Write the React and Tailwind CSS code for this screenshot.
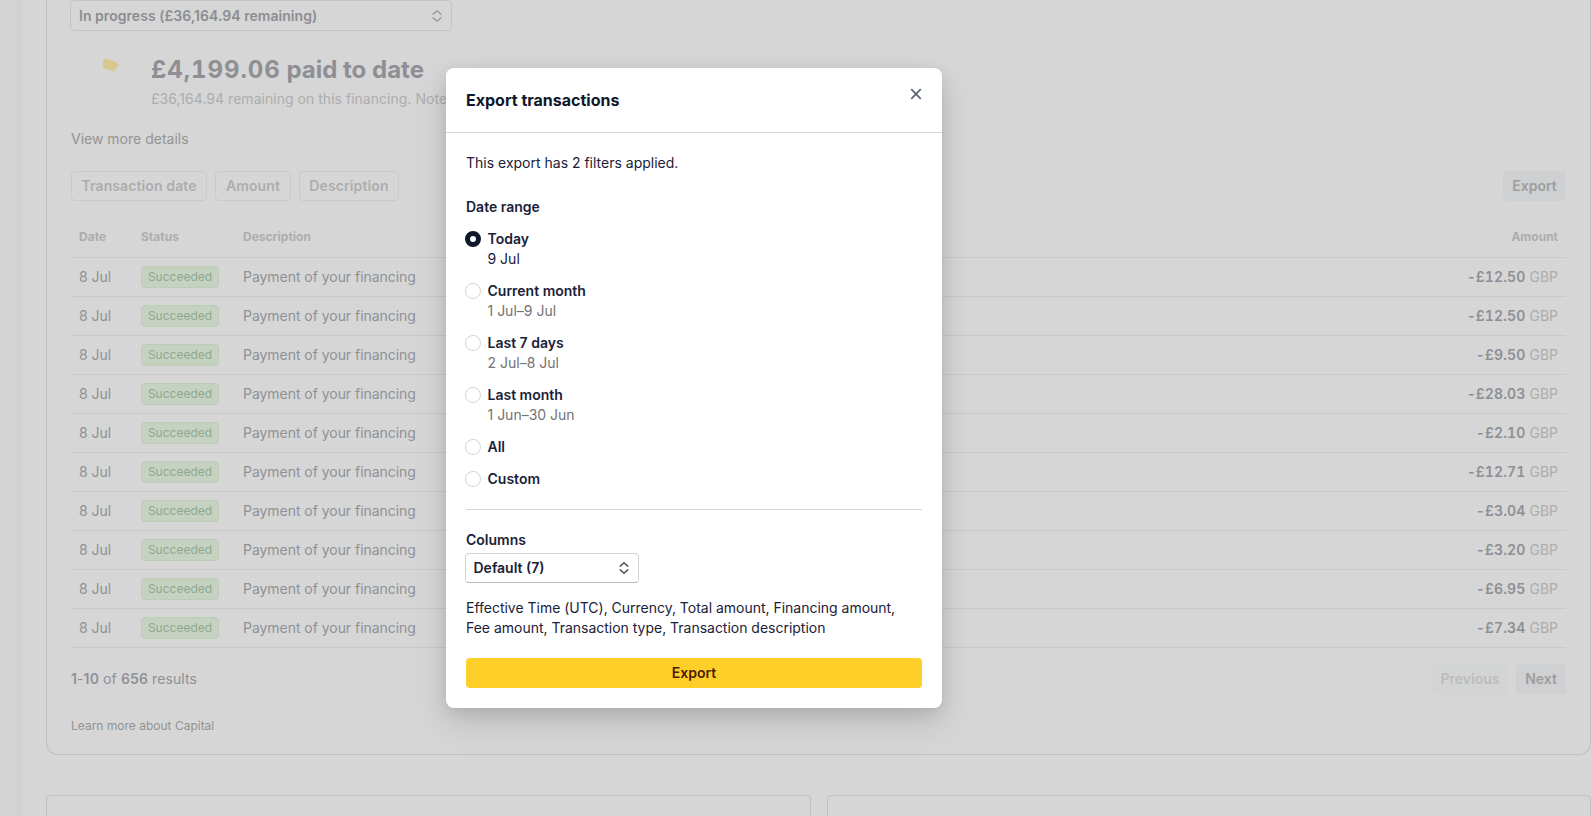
const transactions = [
  "12.50",
  "12.50",
  "9.50",
  "28.03",
  "2.10",
  "12.71",
  "3.04",
  "3.20",
  "6.95",
  "7.34",
];

const ranges = [
  { label: "Today", dates: "9 Jul", checked: true },
  { label: "Current month", dates: "1 Jul–9 Jul" },
  { label: "Last 7 days", dates: "2 Jul–8 Jul" },
  { label: "Last month", dates: "1 Jun–30 Jun" },
  { label: "All" },
  { label: "Custom" },
];

const Chevrons = ({ className }) => (
  <svg
    width="10"
    height="12"
    viewBox="0 0 10 12"
    fill="none"
    stroke="currentColor"
    strokeWidth="1.5"
    strokeLinecap="round"
    strokeLinejoin="round"
    className={className}
  >
    <path d="M1.2 4.1 5 0.8l3.8 3.3" />
    <path d="M1.2 7.9 5 11.2l3.8-3.3" />
  </svg>
);

const CloseIcon = ({ className }) => (
  <svg
    width="12"
    height="12"
    viewBox="0 0 12 12"
    fill="none"
    stroke="currentColor"
    strokeWidth="1.8"
    className={className}
  >
    <path d="m1.2 1.2 9.6 9.6M10.8 1.2l-9.6 9.6" />
  </svg>
);

const FilterButton = ({ children, className }) => (
  <button
    className={`h-[30px] rounded border border-[#cacaca] text-center font-semibold tracking-[0.008em] text-[#adadad] ${className}`}
  >
    {children}
  </button>
);

const TransactionRow = ({ amount }) => (
  <div className="flex h-[39px] items-center border-b border-[#c9c9c9] px-2">
    <div className="w-[62px] text-[#8f9196]">8 Jul</div>
    <div className="w-[102px]">
      <span className="flex h-[22px] w-[78px] items-center justify-center rounded border border-[#bccdb7] bg-[#c5d2c1] text-xs text-[#8fa98e]">
        Succeeded
      </span>
    </div>
    <div className="flex-1 tracking-[-0.003em] text-[#8f9196]">
      Payment of your financing
    </div>
    <div className="text-[#adadad]">
      <span className="font-semibold tabular-nums tracking-[0.01em] text-[#8d8f94]">
        -£{amount}
      </span>{" "}
      GBP
    </div>
  </div>
);

const FinancingCard = () => (
  <div className="h-[755px] w-[1545px] rounded-b-xl border border-t-0 border-[#bfbfbf] px-6">
    <div className="-ml-px flex h-[31px] w-[382px] items-center justify-between rounded border border-[#c4c4c4] pl-2 pr-[9px] font-semibold tracking-[0.003em] text-[#8b8d92]">
      In progress (£36,164.94 remaining)
      <Chevrons className="text-[#9b9b9b]" />
    </div>

    <div className="mt-[22px] flex">
      <svg width="64" height="56" viewBox="0 0 64 56" className="mr-4">
        <path d="M32 6a26 26 0 0 1 16 5.4L42.5 19a16 16 0 0 0-10.5-3.3Z" fill="#d8c88f" />
      </svg>
      <div>
        <h1 className="h-8 pt-px text-2xl font-bold text-[#8d8f94]">
          <span className="tabular-nums tracking-[0.039em]">£4,199.06</span>{" "}
          paid to date
        </h1>
        <p className="mt-1 whitespace-nowrap tracking-[0.002em] text-[#adadad]">
          £36,164.94 remaining on this financing. Note
        </p>
      </div>
    </div>
    <p className="mt-5 text-[#949494]">View more details</p>

    <div className="mt-[22px] flex gap-2">
      <FilterButton className="w-[136px]">Transaction date</FilterButton>
      <FilterButton className="w-[76px]">Amount</FilterButton>
      <FilterButton className="w-[100px]">Description</FilterButton>
      <button className="ml-auto h-[30px] w-[63px] rounded bg-[#cfd0d1] font-semibold text-[#9e9e9e]">
        Export
      </button>
    </div>

    <div className="mt-4">
      <div className="flex h-[41px] items-center border-b border-[#c9c9c9] px-2 text-xs font-bold text-[#adadad]">
        <div className="w-[62px]">Date</div>
        <div className="w-[102px]">Status</div>
        <div className="flex-1">Description</div>
        <div>Amount</div>
      </div>
      {transactions.map((amount, i) => (
        <TransactionRow key={i} amount={amount} />
      ))}
    </div>

    <div className="mt-4 flex items-center gap-2">
      <p className="mr-auto tracking-[0.008em] text-[#8f9196]">
        <span className="font-semibold">1</span>-
        <span className="font-semibold">10</span> of{" "}
        <span className="font-semibold">656</span> results
      </p>
      <button className="h-[30px] w-[76px] rounded bg-[#d3d4d4] font-semibold text-[#bcbcbc]">
        Previous
      </button>
      <button className="h-[30px] w-[50px] rounded bg-[#cfd0d1] font-semibold text-[#9e9e9e]">
        Next
      </button>
    </div>
    <p className="mt-[22px] text-xs leading-5 text-[#939393]">
      Learn more about Capital
    </p>
  </div>
);

const ExportDialog = () => (
  <div className="absolute left-[446px] top-[68px] h-[640px] w-[496px] rounded-lg bg-white text-[#1a2138] shadow-[0_15px_35px_0_rgba(0,0,0,0.12),0_5px_15px_0_rgba(0,0,0,0.1)]">
    <div className="flex h-[65px] items-start justify-between border-b border-[#d6d6d6] px-5">
      <h2 className="mt-5 text-base font-bold text-[#0f172a]">
        Export transactions
      </h2>
      <CloseIcon className="mt-5 text-[#5f6477]" />
    </div>

    <div className="px-5 pt-5">
      <p>This export has 2 filters applied.</p>

      <h3 className="mt-6 font-semibold">Date range</h3>
      <div className="mt-3 flex flex-col gap-3">
        {ranges.map((range) => (
          <label key={range.label} className="-ml-px flex gap-[6.5px]">
            <span
              className={`mt-0.5 size-4 rounded-full ${
                range.checked
                  ? "border-5 border-[#0f172a]"
                  : "border border-[#d5d5d5]"
              }`}
            />
            <span>
              <span className="block font-semibold">{range.label}</span>
              {range.dates && (
                <span
                  className={`block ${range.checked ? "" : "text-[#737373]"}`}
                >
                  {range.dates}
                </span>
              )}
            </span>
          </label>
        ))}
      </div>

      <hr className="mt-5 border-[#d6d6d6]" />

      <h3 className="mt-5 font-semibold">Columns</h3>
      <div className="-ml-px mt-[3px] flex h-[30px] w-[174px] items-center justify-between rounded border border-[#d5d5d5] border-b-[#b8b8b8] pl-[7.5px] pr-[9px] font-semibold">
        Default (7)
        <Chevrons className="text-[#4b5468]" />
      </div>
      <p className="mt-[15px] whitespace-nowrap tracking-[-0.001em]">
        Effective Time (UTC), Currency, Total amount, Financing amount,
        <br />
        Fee amount, Transaction type, Transaction description
      </p>

      <button className="mt-5 h-[30px] w-full rounded bg-[#ffcf29] font-semibold text-[#4a2000]">
        Export
      </button>
    </div>
  </div>
);

export default function App() {
  return (
    <div className="relative flex h-[816px] w-[1592px] overflow-hidden bg-[#d6d6d6] font-['Inter',sans-serif] text-sm">
      <div className="w-[22px] border-r border-[#cfd0d3] bg-gradient-to-r from-[#d5d5d5] to-[#d1d2d4]" />
      <main className="ml-6">
        <FinancingCard />
        <div className="mt-10 flex gap-4">
          <div className="h-10 w-[765px] rounded border border-[#bfbfbf]" />
          <div className="h-10 w-[764px] rounded border border-[#bfbfbf]" />
        </div>
      </main>
      <ExportDialog />
    </div>
  );
}
